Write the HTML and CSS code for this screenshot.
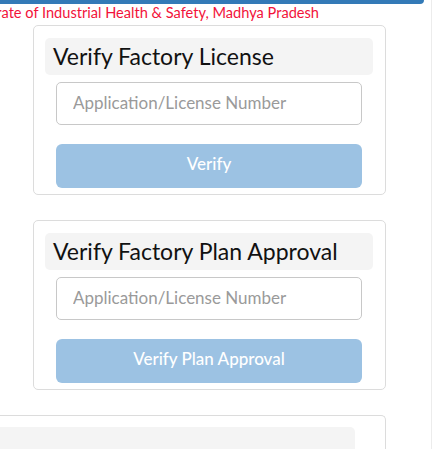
FILE: index.html
```html
<!DOCTYPE html>
<html>
<head>
<meta charset="utf-8">
<link rel="stylesheet" href="styles.css">
</head>
<body>
<div class="page">
  <div class="main">
    <div class="topbar"></div>
    <div class="dept"><span>Directorate of Industrial Health &amp; Safety, Madhya Pradesh</span></div>
    <div class="card">
      <div class="card-title">Verify Factory License</div>
      <div class="card-body">
        <input class="field" type="text" placeholder="Application/License Number">
        <button class="btn">Verify</button>
      </div>
    </div>
    <div class="card">
      <div class="card-title">Verify Factory Plan Approval</div>
      <div class="card-body">
        <input class="field" type="text" placeholder="Application/License Number">
        <button class="btn">Verify Plan Approval</button>
      </div>
    </div>
    <div class="card card-wide">
      <div class="card-title card-title-wide"></div>
    </div>
  </div>
  <div class="side"></div>
</div>
</body>
</html>
```
FILE: styles.css
```css
html, body {
  margin: 0;
  padding: 0;
  background: #fff;
  overflow: hidden;
}
body {
  font-family: Lato, "Open Sans", sans-serif;
  width: 439px;
  height: 449px;
}
.page {
  display: flex;
  height: 449px;
}
.main {
  width: 431px;
  overflow: hidden;
  border-right: 1px solid #ececec;
}
.topbar {
  width: 424px;
  height: 4px;
  background: #337ab7;
  border-bottom-right-radius: 8px;
}
.dept {
  display: flex;
  justify-content: flex-end;
  width: 319px;
  white-space: nowrap;
  color: #f2123a;
  font-size: 14.6px;
  line-height: 18px;
  height: 21px;
}
.card {
  margin-left: 33px;
  width: 328px;
  border: 1px solid #dcdcdc;
  border-radius: 5px;
  padding: 12px 12px 6px 11px;
  margin-bottom: 25px;
}
.card-title {
  background: #f4f4f4;
  border-radius: 5px;
  height: 37px;
  padding-left: 8px;
  font-size: 23px;
  line-height: 36px;
  color: #111;
  white-space: nowrap;
}
.card-body {
  display: flex;
  flex-direction: column;
  padding: 7px 11px 0 11px;
  gap: 19px;
}
.field {
  box-sizing: border-box;
  height: 43px;
  width: 100%;
  border: 1px solid #c8c8c8;
  border-radius: 5px;
  padding: 0 16px 2px;
  font-family: inherit;
  font-size: 17px;
  color: #555;
  outline: none;
}
.field::placeholder {
  color: #9a9a9a;
}
.btn {
  height: 44px;
  width: 100%;
  border: none;
  border-radius: 6px;
  background: #9cc2e3;
  color: #fff;
  font-family: inherit;
  font-size: 17px;
  font-weight: 500;
  padding: 0 0 6px;
}
.card-wide {
  margin-left: -20px;
  width: 375px;
  padding: 11px 30px 0 0;
  border-bottom: none;
  border-left: none;
  border-bottom-left-radius: 0;
  border-top-left-radius: 0;
}
.card-title-wide {
  height: 40px;
}
```
